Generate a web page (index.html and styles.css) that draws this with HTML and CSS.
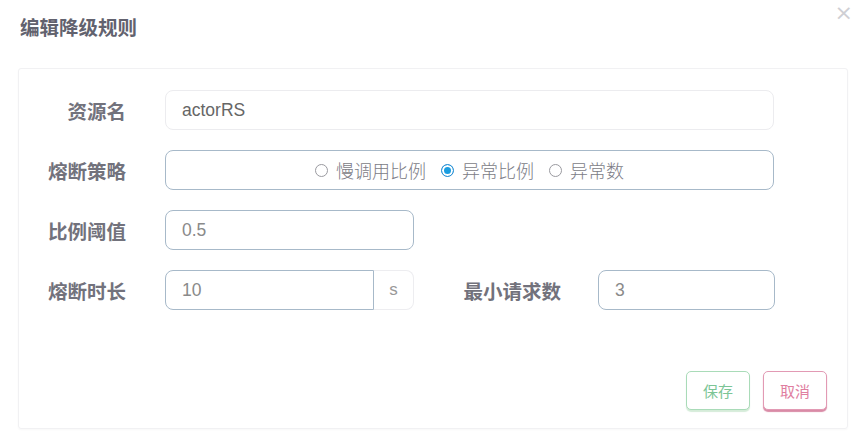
FILE: index.html
```html
<!DOCTYPE html>
<html lang="zh">
<head>
<meta charset="utf-8">
<link rel="stylesheet" href="styles.css">
</head>
<body>
<div class="dialog">
  <div class="header">
    <h3 class="title">编辑降级规则</h3>
    <span class="close">×</span>
  </div>
  <div class="panel">
    <div class="row">
      <label class="label">资源名</label>
      <div class="input input-full input-plain">actorRS</div>
    </div>
    <div class="row">
      <label class="label">熔断策略</label>
      <div class="input input-full radios">
        <span class="radio"><span class="dot"></span>慢调用比例</span>
        <span class="radio"><span class="dot checked"></span>异常比例</span>
        <span class="radio"><span class="dot"></span>异常数</span>
      </div>
    </div>
    <div class="row">
      <label class="label">比例阈值</label>
      <div class="input input-mid">0.5</div>
    </div>
    <div class="row">
      <label class="label">熔断时长</label>
      <div class="group">
        <div class="input group-input">10</div>
        <div class="addon">s</div>
      </div>
      <label class="label label-2">最小请求数</label>
      <div class="input input-small">3</div>
    </div>
    <div class="actions">
      <button class="btn btn-save">保存</button>
      <button class="btn btn-cancel">取消</button>
    </div>
  </div>
</div>
</body>
</html>
```
FILE: styles.css
```css
* { box-sizing: border-box; }
body {
  margin: 0;
  background: #fff;
  font-family: "Liberation Sans", "Noto Sans CJK SC", sans-serif;
  width: 865px;
  height: 436px;
  overflow: hidden;
}
.dialog { padding: 0 17px 0 18px; }
.header {
  position: relative;
  height: 68px;
}
.title {
  margin: 0;
  padding: 14px 0 0 2px;
  font-size: 19.5px;
  font-weight: bold;
  color: #62626e;
  line-height: 26px;
  font-family: "Noto Sans CJK SC", sans-serif;
}
.close {
  position: absolute;
  right: -5px;
  top: 2px;
  font-size: 22px;
  line-height: 22px;
  color: #cfcfd4;
  font-family: "DejaVu Sans", sans-serif;
}
.panel {
  border: 1px solid #f1f1f3;
  border-radius: 3px;
  padding: 21px 20px 18px 0;
  display: flex;
  flex-direction: column;
  gap: 20px;
  box-shadow: 0 1px 2px rgba(0,0,0,0.03);
}
.row {
  display: flex;
  align-items: center;
  height: 40px;
}
.label {
  width: 107px;
  margin-right: 39px;
  text-align: right;
  font-size: 19.5px;
  font-weight: bold;
  color: #72727c;
  font-family: "Noto Sans CJK SC", sans-serif;
  white-space: nowrap;
}
.input {
  height: 40px;
  border: 1px solid #a7b9c9;
  border-radius: 8px;
  padding: 0 16px;
  display: flex;
  align-items: center;
  font-size: 17.5px;
  color: #8a8a8a;
  background: #fff;
}
.input-full { width: 609px; }
.input-plain { border-color: #ececef; color: #666; }
.input-mid { width: 249px; }
.radios {
  justify-content: center;
  gap: 15px;
  font-size: 18px;
  font-weight: 300;
  color: #7c7c86;
  font-family: "Noto Sans CJK SC", sans-serif;
}
.radio { display: inline-flex; align-items: center; }
.dot {
  width: 13px;
  height: 13px;
  border: 1px solid #9a9aa0;
  border-radius: 50%;
  margin-right: 8px;
  background: #fff;
}
.dot.checked {
  border: 1px solid #2b8fd3;
  background: #1a9de0;
  box-shadow: inset 0 0 0 2px #fff;
}
.group { display: flex; width: 249px; }
.group-input {
  width: 209px;
  border-radius: 8px 0 0 8px;
}
.addon {
  width: 40px;
  height: 40px;
  border: 1px solid #ededf0;
  border-left: none;
  border-radius: 0 8px 8px 0;
  display: flex;
  align-items: center;
  justify-content: center;
  font-size: 17px;
  color: #999;
}
.label-2 { width: 147px; margin-right: 37px; }
.input-small { width: 177px; }
.actions {
  display: flex;
  justify-content: flex-end;
  gap: 13px;
  margin-top: 41px;
}
.btn {
  width: 64px;
  height: 39px;
  border-radius: 5px;
  background: #fff;
  font-size: 15px;
  font-family: "Noto Sans CJK SC", sans-serif;
  cursor: pointer;
}
.btn-save {
  border: 1px solid #a9dbb8;
  color: #7cc596;
  box-shadow: 0 2px 1px #d5ecd9;
}
.btn-cancel {
  border: 1px solid #e29ab4;
  color: #e07ea0;
  box-shadow: 0 2px 1px #d98aa6;
}
```
